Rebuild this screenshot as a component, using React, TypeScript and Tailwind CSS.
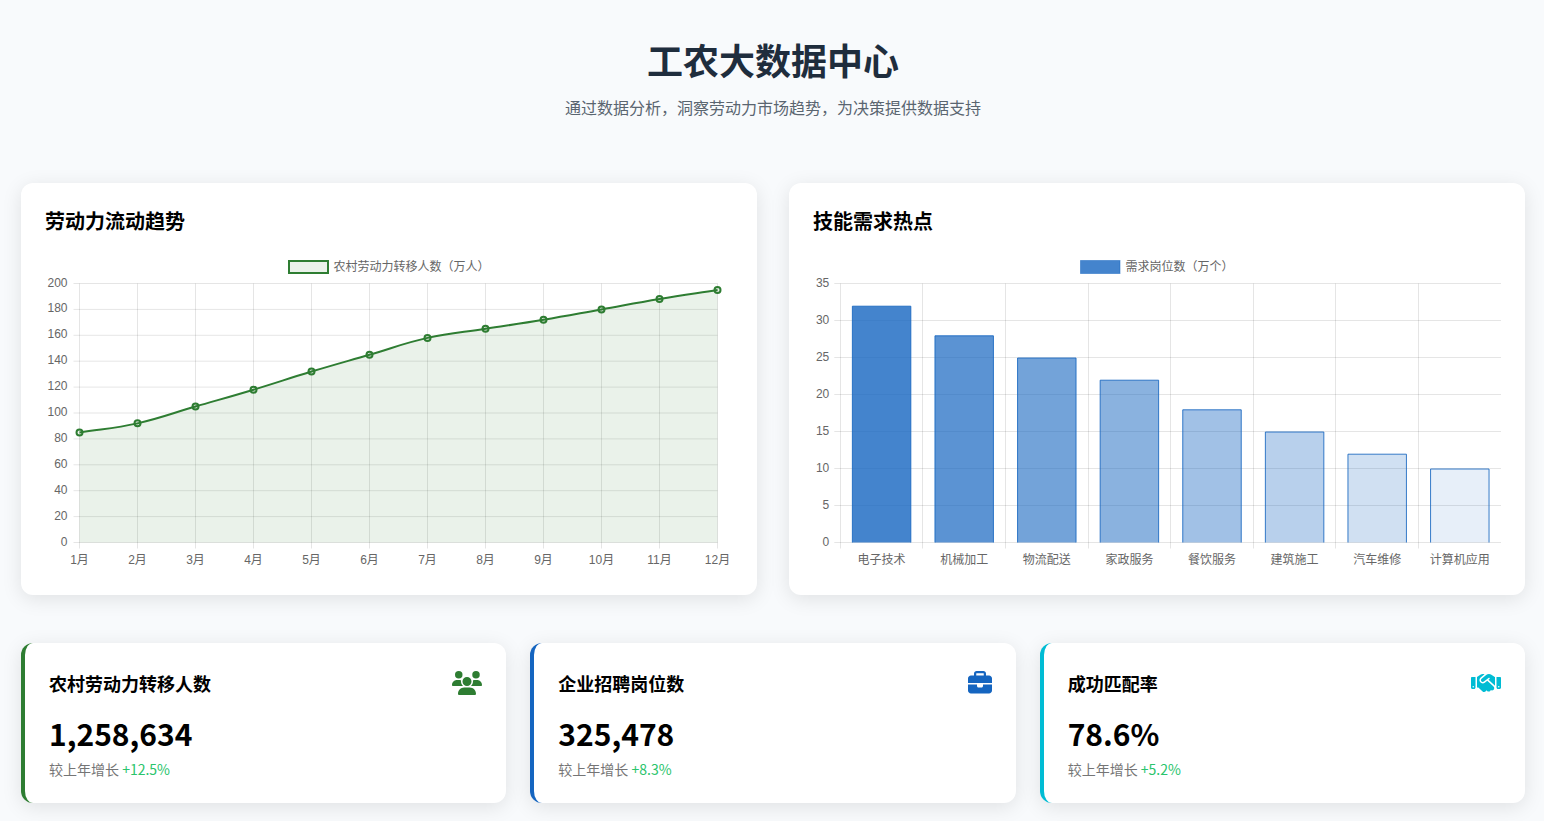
import { FaUsers, FaBriefcase, FaHandshake } from "react-icons/fa6";

const OX = 45;
const OY = 251;
const months = ["1月", "2月", "3月", "4月", "5月", "6月", "7月", "8月", "9月", "10月", "11月", "12月"];
const flow = [85, 92, 105, 118, 132, 145, 158, 165, 172, 180, 188, 195];
const skills = ["电子技术", "机械加工", "物流配送", "家政服务", "餐饮服务", "建筑施工", "汽车维修", "计算机应用"];
const demand = [32, 28, 25, 22, 18, 15, 12, 10];
const alpha = [0.8, 0.7, 0.6, 0.5, 0.4, 0.3, 0.2, 0.1];
const gridStroke = "rgba(0,0,0,0.1)";

function spline(points: [number, number][], t: number) {
  let d = `M${points[0][0]} ${points[0][1]}`;
  const ctrl = points.map((p, i) => {
    const a = points[Math.max(i - 1, 0)];
    const c = points[Math.min(i + 1, points.length - 1)];
    const d01 = Math.hypot(p[0] - a[0], p[1] - a[1]);
    const d12 = Math.hypot(c[0] - p[0], c[1] - p[1]);
    const s01 = d01 / (d01 + d12 || 1);
    const s12 = d12 / (d01 + d12 || 1);
    return {
      px: p[0] - t * s01 * (c[0] - a[0]),
      py: p[1] - t * s01 * (c[1] - a[1]),
      nx: p[0] + t * s12 * (c[0] - a[0]),
      ny: p[1] + t * s12 * (c[1] - a[1]),
    };
  });
  for (let i = 1; i < points.length; i++) {
    d += `C${ctrl[i - 1].nx} ${ctrl[i - 1].ny} ${ctrl[i].px} ${ctrl[i].py} ${points[i][0]} ${points[i][1]}`;
  }
  return d;
}

function LineChart() {
  const left = 79.5 - OX;
  const right = 717.5 - OX;
  const top = 283.5 - OY;
  const bottom = 542.5 - OY;
  const stepX = (right - left) / 11;
  const y = (v: number) => bottom - (v / 200) * (bottom - top);
  const pts = flow.map((v, i) => [left + i * stepX, y(v)] as [number, number]);
  const path = spline(pts, 0.4);
  const ticks = [0, 20, 40, 60, 80, 100, 120, 140, 160, 180, 200];
  return (
    <svg width="688" height="320" viewBox="0 0 688 320" className="block font-['Liberation_Sans','Noto_Sans_CJK_SC',sans-serif] text-[12px]">
      <rect x="244" y="10" width="39" height="12" fill="rgba(46,125,50,0.1)" stroke="#2e7d32" strokeWidth="2" />
      <text x="288.5" y="19.5" fill="#666">农村劳动力转移人数（万人）</text>
      {ticks.map((t) => (
        <g key={t}>
          <line x1={left - 6} x2={right} y1={y(t)} y2={y(t)} stroke={gridStroke} />
          <text x={left - 12} y={y(t) + 3} textAnchor="end" fill="#666">{t}</text>
        </g>
      ))}
      {months.map((m, i) => (
        <g key={m}>
          <line x1={left + i * stepX} x2={left + i * stepX} y1={top} y2={bottom + 6} stroke={gridStroke} />
          <text x={left + i * stepX} y={bottom + 21} textAnchor="middle" fill="#666">{m}</text>
        </g>
      ))}
      <path d={`${path}L${right} ${bottom}L${left} ${bottom}Z`} fill="rgba(46,125,50,0.1)" />
      <path d={path} fill="none" stroke="#2e7d32" strokeWidth="2" />
      {pts.map((p, i) => (
        <circle key={i} cx={p[0]} cy={p[1]} r="3" fill="rgba(46,125,50,0.1)" stroke="#2e7d32" strokeWidth="2" />
      ))}
    </svg>
  );
}

function BarChart() {
  const left = 840.3 - OX - 768;
  const step = 82.6;
  const right = left + 8 * step;
  const top = 283.5 - OY;
  const bottom = 542.5 - OY;
  const y = (v: number) => bottom - (v / 35) * (bottom - top);
  const ticks = [0, 5, 10, 15, 20, 25, 30, 35];
  const barW = step * 0.72;
  return (
    <svg width="688" height="320" viewBox="0 0 688 320" className="block font-['Liberation_Sans','Noto_Sans_CJK_SC',sans-serif] text-[12px]">
      <rect x="267.5" y="9.5" width="39.5" height="13" fill="rgba(21,101,192,0.8)" stroke="rgba(21,101,192,0.5)" strokeWidth="1" />
      <text x="312.5" y="19.5" fill="#666">需求岗位数（万个）</text>
      {ticks.map((t) => (
        <g key={t}>
          <line x1={left - 6} x2={right} y1={y(t)} y2={y(t)} stroke={gridStroke} />
          <text x={left - 11} y={y(t) + 3} textAnchor="end" fill="#666">{t}</text>
        </g>
      ))}
      {Array.from({ length: 9 }, (_, i) => (
        <line key={i} x1={Math.floor(left + i * step) + 0.5} x2={Math.floor(left + i * step) + 0.5} y1={top} y2={bottom + 6} stroke={gridStroke} />
      ))}
      {skills.map((s, i) => {
        const cx = left + (i + 0.5) * step;
        const x0 = cx - barW / 2 + 0.5;
        const x1 = cx + barW / 2 - 0.5;
        const yt = y(demand[i]) + 0.5;
        return (
          <g key={s}>
            <path d={`M${x0} ${bottom}V${yt}H${x1}V${bottom}`} fill={`rgba(21,101,192,${alpha[i]})`} stroke="#1565c0" strokeOpacity="0.85" strokeWidth="1" />
            <text x={cx} y={bottom + 21} textAnchor="middle" fill="#666">{s}</text>
          </g>
        );
      })}
    </svg>
  );
}

function ChartCard({ title, children }: { title: string; children: React.ReactNode }) {
  return (
    <div className="rounded-xl bg-white p-6 shadow-[0_4px_20px_rgba(0,0,0,0.1)]">
      <h2 className="mb-[16px] text-[20px] leading-[28px] font-bold text-black">{title}</h2>
      {children}
    </div>
  );
}

function Stat({ title, value, delta, icon, border }: { title: string; value: string; delta: string; icon: React.ReactNode; border: string }) {
  return (
    <div className={`h-[160px] rounded-xl border-l-4 bg-white p-6 shadow-[0_4px_20px_rgba(0,0,0,0.1)] ${border}`}>
      <div className="mb-[14px] flex items-start justify-between pt-[3px]">
        <h3 className="text-[18px] leading-[27px] font-bold text-black">{title}</h3>
        {icon}
      </div>
      <div className="mb-[3px] text-[30px] leading-[45px] font-bold text-black">{value}</div>
      <div className="text-[14px] leading-[21px] text-[#757575]">
        较上年增长 <span className="text-[#2ac46c]">{delta}</span>
      </div>
    </div>
  );
}

export default function App() {
  return (
    <div className="min-h-[821px] bg-[#f8fafc] pt-[32px] pr-[19px] pb-[18px] pl-[21px] font-['Noto_Sans_CJK_SC','Noto_Sans',sans-serif]">
      <header className="mb-[64px] flex flex-col items-center">
        <h1 className="text-[36px] leading-[54px] font-bold text-[#1f2d3d]">工农大数据中心</h1>
        <p className="mt-[9px] text-[16px] leading-[24px] text-[#5a6570]">通过数据分析，洞察劳动力市场趋势，为决策提供数据支持</p>
      </header>
      <div className="mb-12 grid grid-cols-2 gap-8">
        <ChartCard title="劳动力流动趋势"><LineChart /></ChartCard>
        <ChartCard title="技能需求热点"><BarChart /></ChartCard>
      </div>
      <div className="grid grid-cols-3 gap-6">
        <Stat title="农村劳动力转移人数" value="1,258,634" delta="+12.5%" border="border-[#2e7d32]" icon={<FaUsers className="mt-px h-[24px] w-[30px] text-[#2e7d32]" />} />
        <Stat title="企业招聘岗位数" value="325,478" delta="+8.3%" border="border-[#1565c0]" icon={<FaBriefcase className="mt-px h-[24px] w-[24px] text-[#1565c0]" />} />
        <Stat title="成功匹配率" value="78.6%" delta="+5.2%" border="border-[#00bcd4]" icon={<FaHandshake className="mt-px h-[24px] w-[30px] text-[#00bcd4]" />} />
      </div>
    </div>
  );
}
